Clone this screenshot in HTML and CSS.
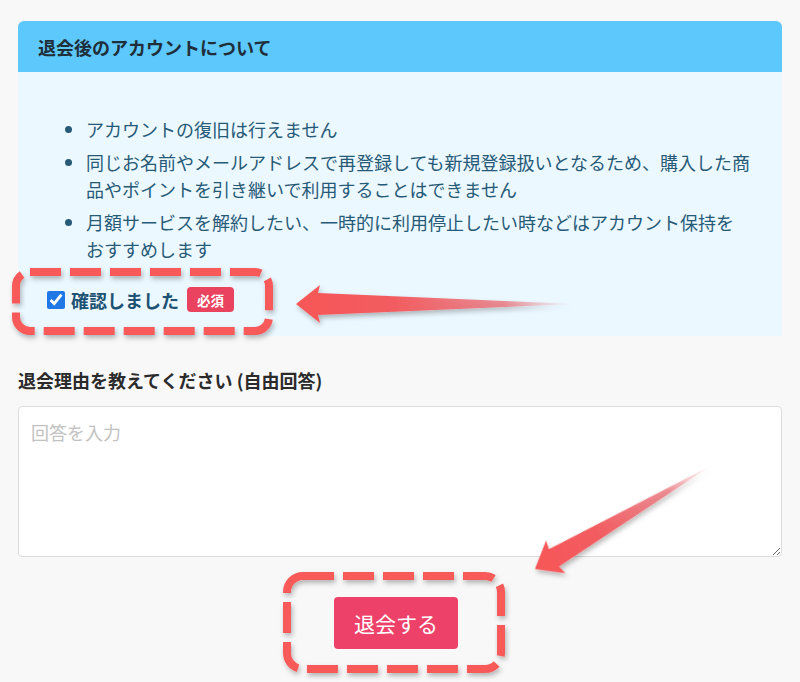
FILE: index.html
```html
<!DOCTYPE html>
<html lang="ja">
<head>
<meta charset="utf-8">
<title>退会</title>
<link rel="stylesheet" href="styles.css">
</head>
<body>
<main class="page">
  <section class="notice">
    <h2 class="notice-title">退会後のアカウントについて</h2>
    <div class="notice-body">
      <ul class="notice-list">
        <li>アカウントの復旧は行えません</li>
        <li>同じお名前やメールアドレスで再登録しても新規登録扱いとなるため、購入した商品やポイントを引き継いで利用することはできません</li>
        <li>月額サービスを解約したい、一時的に利用停止したい時などはアカウント保持を<span class="nowrap">おすすめします</span></li>
      </ul>
      <label class="confirm">
        <input type="checkbox" class="confirm-box" checked>
        <span class="confirm-text">確認しました</span>
        <span class="badge">必須</span>
      </label>
    </div>
  </section>

  <label class="field-label" for="reason">退会理由を教えてください (自由回答)</label>
  <textarea id="reason" class="field-input" placeholder="回答を入力"></textarea>

  <div class="actions">
    <button type="button" class="btn-leave">退会する</button>
  </div>
</main>

<svg class="annotations" width="800" height="682" viewBox="0 0 800 682" aria-hidden="true">
  <defs>
    <filter id="shadow" filterUnits="userSpaceOnUse" x="0" y="0" width="800" height="682">
      <feDropShadow dx="1.5" dy="3" stdDeviation="2.5" flood-color="#000" flood-opacity="0.28"/>
    </filter>
    <linearGradient id="fade" x1="0" y1="0" x2="1" y2="0">
      <stop offset="0" stop-color="#f75757"/>
      <stop offset="0.35" stop-color="#f25c60"/>
      <stop offset="0.75" stop-color="#e9747c" stop-opacity="0.8"/>
      <stop offset="1" stop-color="#f0a0a8" stop-opacity="0"/>
    </linearGradient>
  </defs>
  <g filter="url(#shadow)" fill="none" stroke="#f85a5a" stroke-width="8" stroke-dasharray="31 9">
    <rect x="16" y="272" width="253" height="59" rx="14"/>
    <rect x="287" y="576" width="214" height="93" rx="16"/>
  </g>
  <g filter="url(#shadow)">
    <g transform="translate(296 304)">
      <polygon points="0,0 24,-19 22,-11 279,0 22,11 24,19" fill="url(#fade)"/>
    </g>
    <g transform="translate(535 569) rotate(-30.4)">
      <polygon points="0,0 24,-19 22,-10 205,0 22,10 24,19" fill="url(#fade)"/>
    </g>
  </g>
</svg>
</body>
</html>
```

FILE: styles.css
```css
* {
  box-sizing: border-box;
}

html, body {
  margin: 0;
  padding: 0;
}

body {
  position: relative;
  min-height: 682px;
  background: #f8f8f8;
  font-family: "Noto Sans CJK JP", "Noto Sans", sans-serif;
  color: #333;
}

.page {
  padding: 21px 18px 0;
}

.notice {
  border-radius: 6px 6px 0 0;
  overflow: hidden;
}

.notice-title {
  margin: 0;
  height: 51px;
  padding: 0 20px;
  display: flex;
  align-items: center;
  background: #5cc8fb;
  color: #1f2e39;
  font-size: 18px;
  font-weight: 700;
}

.notice-body {
  background: #ebf8ff;
  padding: 44px 20px 24px 29px;
}

.notice-list {
  margin: 0;
  padding-left: 39px;
  color: #275a77;
  font-size: 18px;
  line-height: 27px;
}

.notice-list li + li {
  margin-top: 6px;
}

.nowrap {
  white-space: nowrap;
}

.confirm {
  margin-top: 24px;
  display: flex;
  align-items: center;
  height: 25px;
}

.confirm-box {
  width: 18px;
  height: 18px;
  margin: 0 6px 0 0;
  accent-color: #1f78e6;
}

.confirm-text {
  color: #1d5272;
  font-size: 18px;
  font-weight: 700;
}

.badge {
  margin-left: 8px;
  height: 25px;
  padding: 0 10px;
  display: inline-flex;
  align-items: center;
  background: #e9435f;
  color: #fff;
  font-size: 13.5px;
  font-weight: 700;
  border-radius: 4px;
}

.field-label {
  display: block;
  margin: 31px 0 12px;
  font-size: 18px;
  line-height: 27px;
  font-weight: 700;
  color: #2b2b2b;
}

.field-input {
  display: block;
  width: 100%;
  height: 151px;
  padding: 12px;
  border: 1px solid #dcdcdc;
  border-radius: 4px;
  background: #fff;
  font-family: inherit;
  font-size: 18px;
  line-height: 27px;
  color: #333;
}

.field-input::placeholder {
  color: #c2c2c2;
}

.actions {
  margin-top: 40px;
  padding-right: 8px;
  display: flex;
  justify-content: center;
}

.btn-leave {
  height: 52px;
  padding: 0 20px;
  border: 0;
  border-radius: 4px;
  background: #ee4169;
  color: #fff;
  font-family: inherit;
  font-size: 21px;
  line-height: 52px;
}

.annotations {
  position: absolute;
  top: 0;
  left: 0;
  pointer-events: none;
}
```
